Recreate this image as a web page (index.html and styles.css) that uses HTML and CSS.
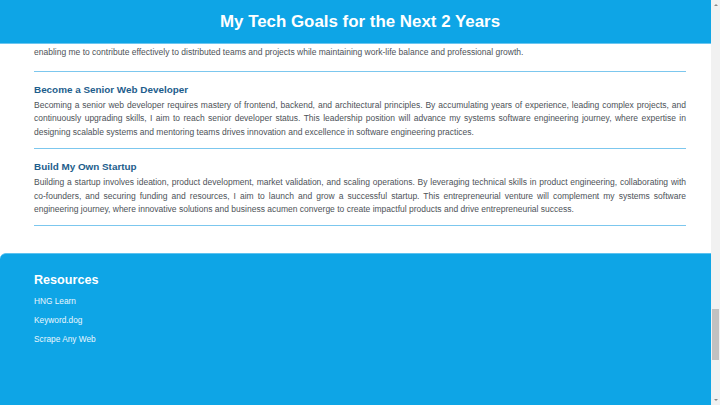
FILE: index.html
```html
<!DOCTYPE html>
<html lang="en">
<head>
<meta charset="utf-8">
<title>My Tech Goals for the Next 2 Years</title>
<link rel="stylesheet" href="styles.css">
</head>
<body>
<div class="viewport">
  <div class="page">
    <header class="site-header">
      <h1 class="site-title">My Tech Goals for the Next 2 Years</h1>
    </header>
    <main class="goals">
      <article class="goal goal-partial">
        <p class="goal-text">enabling me to contribute effectively to distributed teams and projects while maintaining work-life balance and professional growth.</p>
      </article>
      <article class="goal">
        <h3 class="goal-title">Become a Senior Web Developer</h3>
        <p class="goal-text">Becoming a senior web developer requires mastery of frontend, backend, and architectural principles. By accumulating years of experience, leading complex projects, and continuously upgrading skills, I aim to reach senior developer status. This leadership position will advance my systems software engineering journey, where expertise in designing scalable systems and mentoring teams drives innovation and excellence in software engineering practices.</p>
      </article>
      <article class="goal">
        <h3 class="goal-title">Build My Own Startup</h3>
        <p class="goal-text">Building a startup involves ideation, product development, market validation, and scaling operations. By leveraging technical skills in product engineering, collaborating with co-founders, and securing funding and resources, I aim to launch and grow a successful startup. This entrepreneurial venture will complement my systems software engineering journey, where innovative solutions and business acumen converge to create impactful products and drive entrepreneurial success.</p>
      </article>
    </main>
    <footer class="site-footer">
      <h2 class="footer-title">Resources</h2>
      <ul class="footer-links">
        <li><a href="#">HNG Learn</a></li>
        <li><a href="#">Keyword.dog</a></li>
        <li><a href="#">Scrape Any Web</a></li>
      </ul>
    </footer>
  </div>
  <div class="scrollbar">
    <span class="sb-arrow sb-up"></span>
    <span class="sb-track"><span class="sb-thumb"></span></span>
    <span class="sb-arrow sb-down"></span>
  </div>
</div>
</body>
</html>
```
FILE: styles.css
```css
* { box-sizing: border-box; }
html, body { margin: 0; padding: 0; }
body {
  font-family: "Liberation Sans", Arial, sans-serif;
  background: #ffffff;
  color: #4d5258;
}
.viewport {
  display: flex;
  width: 720px;
  height: 405px;
  overflow: hidden;
}
.page {
  width: 711px;
  display: flex;
  flex-direction: column;
}
.site-header {
  height: 44px;
  flex: none;
  background: #0ea5e6;
  border-bottom: 1px solid #6cc6f0;
  display: flex;
  align-items: center;
  justify-content: center;
  padding-left: 9px;
}
.site-title {
  margin: 0;
  color: #ffffff;
  font-size: 16.9px;
  font-weight: bold;
  line-height: 22px;
}
.goals {
  padding: 0 25px 27px 34px;
}
.goal {
  border-bottom: 1px solid #7cc7ee;
  padding: 11px 0 8px;
}
.goal-partial {
  padding-top: 2px;
  padding-bottom: 11px;
}
.goal-title {
  margin: 0 0 3px;
  font-size: 9.9px;
  line-height: 13px;
  font-weight: bold;
  color: #1d5d8c;
}
.goal-text {
  margin: 0;
  font-size: 8.5px;
  line-height: 13.7px;
  text-align: justify;
}
.site-footer {
  flex: 1;
  background: #0ea5e6;
  border-top: 1px solid #5cc2f0;
  border-top-left-radius: 6px;
  padding: 16px 34px 0;
  color: #ffffff;
}
.footer-title {
  margin: 0 0 6px;
  font-size: 12.6px;
  line-height: 20px;
  font-weight: bold;
}
.footer-links {
  list-style: none;
  margin: 0;
  padding: 0;
  display: flex;
  flex-direction: column;
  gap: 8px;
}
.footer-links a {
  color: #eaf6fd;
  text-decoration: none;
  font-size: 8.3px;
  line-height: 11px;
  display: block;
}
.scrollbar {
  width: 9px;
  background: #f1f1f1;
  display: flex;
  flex-direction: column;
  align-items: center;
}
.sb-arrow {
  width: 0;
  height: 0;
  border-left: 2px solid transparent;
  border-right: 2px solid transparent;
  margin: 4px 0;
}
.sb-up { border-bottom: 2px solid #8a8a8a; }
.sb-down { border-top: 2px solid #8a8a8a; }
.sb-track {
  flex: 1;
  width: 100%;
  display: flex;
  flex-direction: column;
  justify-content: flex-end;
  align-items: center;
  padding-bottom: 35px;
}
.sb-thumb {
  width: 7px;
  height: 51px;
  background: #c1c1c1;
}
```
